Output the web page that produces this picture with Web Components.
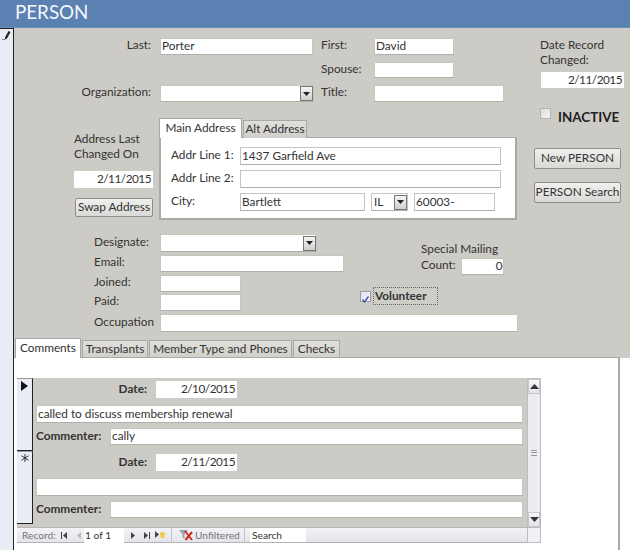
<!DOCTYPE html>
<html lang="en"><head><meta charset="utf-8"><title>PERSON</title>
<style>
html,body{margin:0;padding:0;background:#fff}
body{font:11.8px/15px Lato,"Open Sans",sans-serif;color:#333}
</style></head><body>
<person-form></person-form>
<script>
function def(name, css, html){
  const tpl=document.createElement('template');
  tpl.innerHTML='<style>'+css+'</style>'+html;
  customElements.define(name,class extends HTMLElement{
    constructor(){super();this.attachShadow({mode:'open'}).appendChild(tpl.content.cloneNode(true));}
  });
}
const DROP='<svg width="7" height="4" viewBox="0 0 7 4"><path d="M0 0h7L3.5 4z" fill="#222"/></svg>';

def('p-field',`:host{display:flex;align-items:center;box-sizing:border-box;background:#fff;border:1px solid #c6c5c0;border-bottom-color:#b0afaa;padding:0 1px 2px;white-space:nowrap;overflow:hidden;color:#333}
:host([plain]){border-color:#fff}
:host([right]){justify-content:flex-end;letter-spacing:-.5px}`,'<slot></slot>');

def('p-combo',`:host{display:flex;align-items:center;box-sizing:border-box;background:#fff;border:1px solid #c6c5c0;border-bottom-color:#b0afaa;padding-left:2px;white-space:nowrap}
.t{flex:1;padding-bottom:2px}
.b{width:13px;height:15px;box-sizing:border-box;border:1px solid #777;background:linear-gradient(#f4f4f4,#cfcfcf);display:flex;align-items:center;justify-content:center}`,
'<span class="t"><slot></slot></span><span class="b">'+DROP+'</span>');

def('p-btn',`:host{display:flex;align-items:center;justify-content:center;box-sizing:border-box;padding-bottom:2px;background:linear-gradient(#efefed,#d9d9d6);border:1px solid #8d8d8a;border-radius:2px;white-space:nowrap;color:#333}`,'<slot></slot>');

def('p-tab',`:host{display:flex;align-items:center;justify-content:center;box-sizing:border-box;height:18px;margin-top:2px;padding-bottom:2px;background:linear-gradient(#e0dfdb,#d0cfca);border:1px solid #a8a8a4;border-bottom:none;white-space:nowrap;color:#333}
:host([active]){background:#fff;height:20px;margin-top:0;position:relative}`,'<slot></slot>');

def('p-check',`:host{display:block;box-sizing:border-box;width:11px;height:11px;border:1px solid #b4b4b4;background:linear-gradient(135deg,#dcdcdc,#f6f6f6)}
:host([on]){background:linear-gradient(135deg,#dfe2f2,#f6f6fb);border-color:#9a9ab0}
svg{display:block}`,'<slot></slot>');

def('record-selector',`:host{display:flex;justify-content:center;box-sizing:border-box;width:16px;background:#e9ecf4;border-right:1px solid #222;border-bottom:1px solid #222;border-top:1px solid #9a9a9a;padding-top:2px}`,'<slot></slot>');

def('v-scrollbar',`:host{display:flex;flex-direction:column;width:14px;height:165px;box-sizing:border-box}
.track{height:150px;box-sizing:border-box;background:#ecedf0;border:1px solid #bdbdbd;display:flex;flex-direction:column;align-items:center;justify-content:space-between}
.btn{width:12px;height:15px;box-sizing:border-box;background:linear-gradient(#f6f6f8,#e4e4e8);border:1px solid #c8c8cc;display:flex;align-items:center;justify-content:center}
.grip{width:6px;height:6px;border-top:1px solid #999;border-bottom:1px solid #999;position:relative;box-sizing:border-box}
.grip::after{content:"";position:absolute;left:0;right:0;top:1px;height:2px;border-top:1px solid #999}
.corner{height:15px;box-sizing:border-box;background:#f0f1f4;border:1px solid #bdbdbd;border-top:0}`,
`<div class="track"><div class="btn"><svg width="9" height="5" viewBox="0 0 9 5"><path d="M0 5L4.500 0 9 5z" fill="#334"/></svg></div><div class="grip"></div><div class="btn"><svg width="9" height="5" viewBox="0 0 9 5"><path d="M0 0h9L4.500 5z" fill="#334"/></svg></div></div><div class="corner"></div>`);

def('record-nav',`:host{display:flex;align-items:center;box-sizing:border-box;height:15px;background:linear-gradient(#f2f3f7,#e3e5ea);border-bottom:1px solid #b4b4b4;font-size:10.2px;color:#333;white-space:nowrap}
.lbl{color:#777;margin-left:5px;width:34px}
svg{display:block;flex:none}
.cur{background:#fff;width:40px;height:15px;line-height:15px;box-sizing:border-box;padding-left:1px;margin-left:3px;color:#333}
.sep{width:1px;height:15px;background:#c4c4c4}
.unf{color:#777;margin-left:2px;width:50px}
.search{background:#fff;width:56px;height:14px;line-height:14px;padding-left:2px;box-sizing:border-box;margin-left:5px;color:#333}`,
`<span class="lbl">Record:</span>
<svg width="6" height="7" viewBox="0 0 6 7" style="margin-left:5px"><path d="M0 0h1v7H0zM6 0v7L2 3.5z" fill="#444"/></svg>
<svg width="4" height="7" viewBox="0 0 4 7" style="margin-left:10px"><path d="M4 0v7L0 3.5z" fill="#bbb"/></svg>
<span class="cur">1 of 1</span>
<svg width="4" height="7" viewBox="0 0 4 7" style="margin-left:7px"><path d="M0 0v7l4-3.5z" fill="#444"/></svg>
<svg width="6" height="7" viewBox="0 0 6 7" style="margin-left:9px"><path d="M0 0v7l4-3.5zM5 0h1v7H5z" fill="#444"/></svg>
<svg width="11" height="8" viewBox="0 0 11 8" style="margin-left:5px"><path d="M0 0v7l4-3.5z" fill="#444"/><path d="M5 1h5v6H5z" fill="#f2d774"/><path d="M5 3h5M7.500 1v6" stroke="#e0b83c" stroke-width=".7"/></svg>
<span class="sep" style="margin-left:5px"></span>
<svg width="14" height="12" viewBox="0 0 14 12" style="margin-left:7px"><path d="M0 1h9L5.500 5.500V10L3.500 8.500V5.500z" fill="#9ca3ad"/><path d="M6 2l7 9M13 3L6.500 11" stroke="#c8321e" stroke-width="2"/></svg>
<span class="unf">Unfiltered</span>
<span class="sep" style="margin-left:-1px"></span>
<span class="search">Search</span>`);

def('comments-subform',`:host{display:flex;width:524px;height:166px}
.main{width:510px;display:flex;flex-direction:column}
.rec{display:flex;background:#cdcbc5}
.r1{height:73px}.r2{height:76px;padding-bottom:3px;box-sizing:border-box}
.body{display:flex;flex-direction:column;padding-left:3px}
.date{display:flex;margin-top:3px}
.date span{width:120px;text-align:right;padding-right:9px;box-sizing:border-box;font-weight:700;line-height:16px}
.cm{display:flex}
.cm span{width:74px;font-weight:700;line-height:15px}
.bar{border-top:1px solid #b8b7b2;height:0}`,
`<div class="main">
<div class="rec r1"><record-selector><svg width="7" height="10" viewBox="0 0 7 10"><path d="M0 0l7 5-7 5z" fill="#111"/></svg></record-selector>
<div class="body">
<div class="date"><span>Date:</span><p-field plain right style="width:81px;height:17px">2/10/2015</p-field></div>
<p-field style="width:487px;height:18px;margin-top:7px">called to discuss membership renewal</p-field>
<div class="cm" style="margin-top:5px"><span>Commenter:</span><p-field style="width:413px;height:17px">cally</p-field></div>
</div></div>
<div class="rec r2"><record-selector><svg width="8" height="8" viewBox="0 0 9 9"><path d="M4.500 0v9M0.500 2l8 5M8.500 2l-8 5" stroke="#222" stroke-width="1"/></svg></record-selector>
<div class="body">
<div class="date"><span>Date:</span><p-field plain right style="width:81px;height:17px">2/11/2015</p-field></div>
<p-field style="width:487px;height:18px;margin-top:7px"></p-field>
<div class="cm" style="margin-top:5px"><span>Commenter:</span><p-field style="width:413px;height:17px"></p-field></div>
</div></div>
<div class="bar"></div>
<record-nav></record-nav>
</div>
<v-scrollbar></v-scrollbar>`);

def('person-form',`:host{display:flex;flex-direction:column;width:630px;height:550px;overflow:hidden;background:#cdcbc5;color:#333}
header{height:27px;background:#5b80b2;border-bottom:1px solid #6f8fb8;color:#f4f7fb;font-size:18.8px;line-height:24px;padding-left:15px}
.page{flex:1;display:flex;min-height:0}
.sel{width:13px;background:#e9ecf4;border-top:1px solid #222;border-right:1px solid #222;flex:none}
.sel svg{display:block;margin:1px 0 0 2px}
.content{width:616px;display:flex;flex-direction:column}
.top{display:flex;padding-top:10px}
.left{width:526px;flex:none}
.right{width:90px}
.g1{display:grid;grid-template-columns:146px 161px 53px 130px;grid-template-rows:17px 16px 17px;row-gap:7px;align-items:center}
.g1>span,.g2>span{padding-bottom:4px}
.rl{text-align:right;padding-right:9px}
.addr{display:flex;margin-top:16px;margin-left:60px}
.ac{width:85px;padding-top:13px;box-sizing:border-box}
.tabs{width:358px}
.ts{display:flex;gap:1px;height:20px}
.tp{box-sizing:border-box;height:83px;background:#fff;border:2px solid #a9a9a5;border-top-width:1px;margin-top:-1px;padding:9px 0 0 10px}
.ar{display:flex;align-items:center}
.ar>span{width:69px;flex:none;padding-bottom:3px}
.g2{display:grid;grid-template-columns:66px 200px 157px;grid-template-rows:18px 17px 17px 17px 18px;margin:14px 0 0 80px;align-items:center;row-gap:2.75px}
.side{grid-column:3;grid-row:1/5;align-self:start;height:77px}
.sm{margin:7px 0 0 61px}
.sm .c{display:flex;align-items:center;height:17px;margin-top:2px}
.sm .c span{padding-bottom:4px}
.vol{display:flex;align-items:center;margin-top:12px}
.vl{box-sizing:border-box;width:65px;height:18px;border:1px dotted #666;background:#cfcdc8;margin-left:2px;font-weight:700;line-height:15px;padding-left:1px}
.bt{display:flex;height:20px;margin-top:6px;padding-left:1px;gap:1px}
.pi{width:606px;height:193px;box-sizing:border-box;border-right:2px solid #a9a9a5;border-top:1px solid #a9a9a5;margin-top:-1px;padding:20px 0 0 3px;background:#fff}
.p0{background:#fff;flex:1;display:flex}
.ina{display:flex;height:18px;margin-top:20px}
.ina b{font-size:13.4px;margin-left:7px;line-height:19px;color:#222}`,
`<header>PERSON</header>
<div class="page">
<div class="sel"><svg width="9" height="10" viewBox="0 0 9 10"><path d="M3 7.500L6.500 1l2 1L5 8.500 3 9.500z" fill="#222"/><path d="M0 9.500h3" stroke="#888"/></svg></div>
<div class="content">
<div class="top">
<div class="left">
<div class="g1">
<span class="rl">Last:</span><p-field style="width:153px;height:17px">Porter</p-field><span>First:</span><p-field style="width:80px;height:17px">David</p-field>
<span></span><span></span><span>Spouse:</span><p-field style="width:80px;height:16px"></p-field>
<span class="rl">Organization:</span><p-combo style="width:154px;height:17px"></p-combo><span>Title:</span><p-field style="width:130px;height:17px"></p-field>
</div>
<div class="addr">
<div class="ac">
<div>Address Last<br>Changed On</div>
<p-field plain right style="width:79px;height:17px;margin-top:10px">2/11/2015</p-field>
<p-btn style="width:78px;height:19px;margin:10px 0 0 1px">Swap Address</p-btn>
</div>
<div class="tabs">
<div class="ts"><p-tab active style="width:83px">Main Address</p-tab><p-tab style="width:64px">Alt Address</p-tab></div>
<div class="tp">
<div class="ar"><span>Addr Line 1:</span><p-field style="width:261px;height:18px">1437 Garfield Ave</p-field></div>
<div class="ar" style="margin-top:5px"><span>Addr Line 2:</span><p-field style="width:261px;height:18px"></p-field></div>
<div class="ar" style="margin-top:5px"><span>City:</span><p-field style="width:125px;height:18px">Bartlett</p-field><p-combo style="width:37px;height:18px;margin-left:6px">IL</p-combo><p-field style="width:81px;height:18px;margin-left:6px">60003-</p-field></div>
</div>
</div>
</div>
<div class="g2">
<span>Designate:</span><p-combo style="width:157px;height:18px"></p-combo>
<div class="side">
<div class="sm">Special Mailing<div class="c"><span style="width:40px">Count:</span><p-field right style="width:43px;height:17px">0</p-field></div></div>
<div class="vol"><p-check on><svg width="9" height="9" viewBox="0 0 9 9"><path d="M1.500 4.500L3.500 7 7.500 1.500" fill="none" stroke="#3b4fa0" stroke-width="1.300"/></svg></p-check><div class="vl">Volunteer</div></div>
</div>
<span>Email:</span><p-field style="width:184px;height:17px"></p-field>
<span>Joined:</span><p-field style="width:81px;height:17px"></p-field>
<span>Paid:</span><p-field style="width:81px;height:17px"></p-field>
<span>Occupation</span><p-field style="width:358px;height:18px;grid-column:2/4"></p-field>
</div>
</div>
<div class="right">
<div style="margin-top:-1px">Date Record<br>Changed:</div>
<p-field plain right style="width:83px;height:16px;margin:5px 0 0 1px">2/11/2015</p-field>
<div class="ina"><p-check></p-check><b>INACTIVE</b></div>
<p-btn style="width:87px;height:21px;margin:22px 0 0 -6px">New PERSON</p-btn>
<p-btn style="width:87px;height:21px;margin:13px 0 0 -6px">PERSON Search</p-btn>
</div>
</div>
<div class="bt"><p-tab active style="width:66px">Comments</p-tab><p-tab style="width:66px">Transplants</p-tab><p-tab style="width:143px">Member Type and Phones</p-tab><p-tab style="width:47px">Checks</p-tab></div>
<div class="p0"><div class="pi"><comments-subform></comments-subform></div></div>
</div>
</div>`);
</script>
</body></html>
